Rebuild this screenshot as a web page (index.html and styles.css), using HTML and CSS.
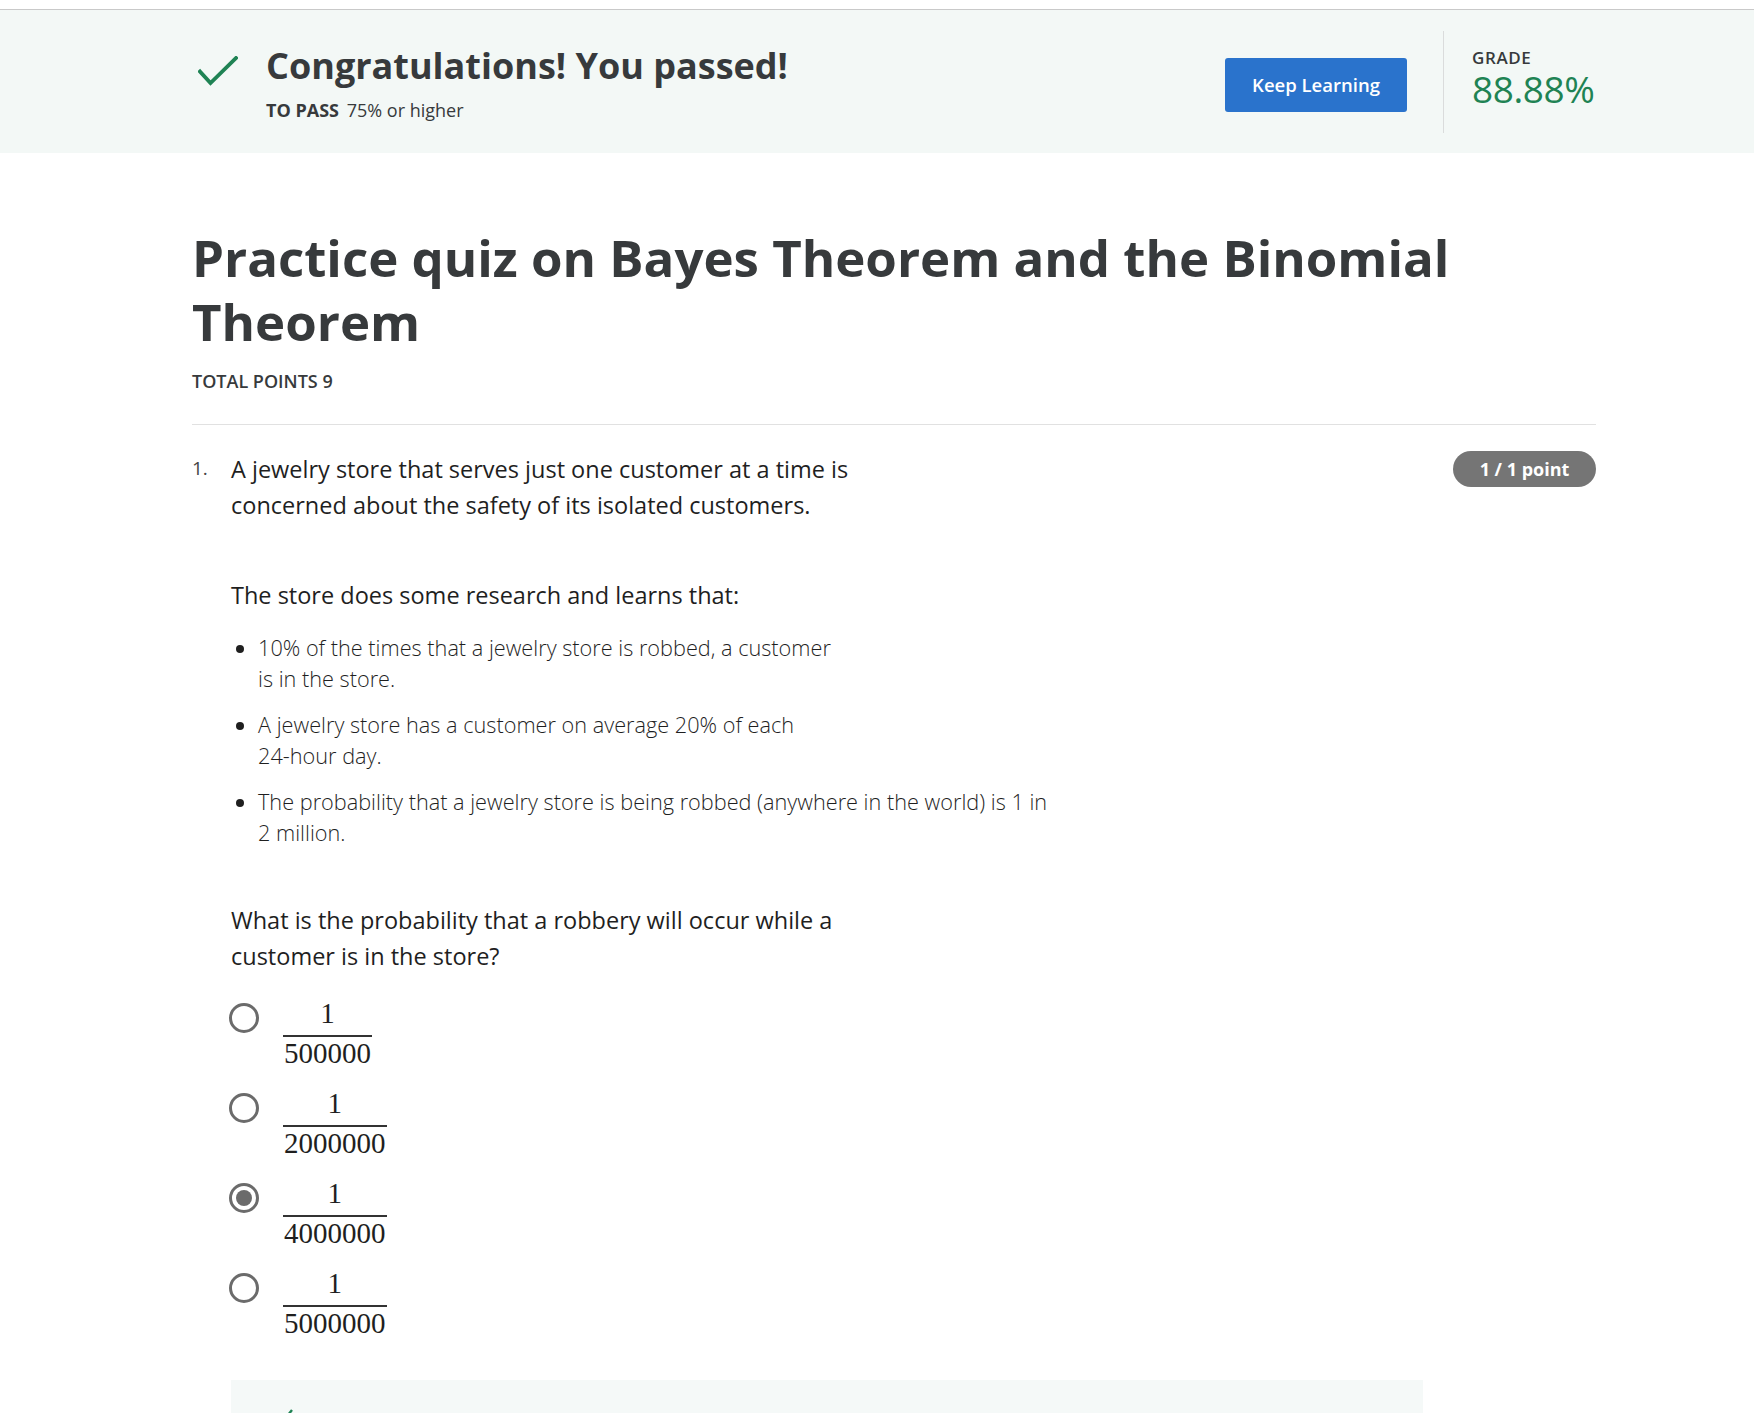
FILE: index.html
```html
<!DOCTYPE html>
<html lang="en">
<head>
<meta charset="utf-8">
<title>Practice quiz on Bayes Theorem and the Binomial Theorem</title>
<link rel="stylesheet" href="styles.css">
</head>
<body>
<div class="topbar"></div>
<header class="banner">
  <div class="banner-inner">
    <div class="pass">
      <svg class="check" width="40" height="30" viewBox="0 0 40 30" aria-hidden="true">
        <path d="M2 15.5 L12.5 27 L38 2" fill="none" stroke="#1f8354" stroke-width="3.8" stroke-linecap="square" stroke-linejoin="miter"/>
      </svg>
      <div class="pass-text">
        <h2 class="pass-title">Congratulations! You passed!</h2>
        <div class="to-pass"><span class="to-pass-label">TO PASS</span> 75% or higher</div>
      </div>
    </div>
    <div class="actions">
      <button class="keep-btn" type="button">Keep Learning</button>
      <div class="divider"></div>
      <div class="grade">
        <div class="grade-label">GRADE</div>
        <div class="grade-value">88.88%</div>
      </div>
    </div>
  </div>
</header>

<main class="content">
  <h1 class="quiz-title">Practice quiz on Bayes Theorem and the Binomial Theorem</h1>
  <div class="total-points">TOTAL POINTS 9</div>
  <hr class="rule">

  <section class="question">
    <div class="q-num">1.</div>
    <div class="q-body">
      <p class="q-text">A jewelry store that serves just one customer at a time is<br>concerned about the safety of its isolated customers.</p>
      <p class="q-text q-gap">The store does some research and learns that:</p>
      <ul class="facts">
        <li>10% of the times that a jewelry store is robbed, a customer<br>is in the store.</li>
        <li>A jewelry store has a customer on average 20% of each<br>24-hour day.</li>
        <li>The probability that a jewelry store is being robbed (anywhere in the world) is 1 in<br>2 million.</li>
      </ul>
      <p class="q-text q-ask">What is the probability that a robbery will occur while a<br>customer is in the store?</p>

      <div class="options">
        <div class="option">
          <span class="radio"></span>
          <span class="frac"><span class="num">1</span><span class="den">500000</span></span>
        </div>
        <div class="option">
          <span class="radio"></span>
          <span class="frac"><span class="num">1</span><span class="den">2000000</span></span>
        </div>
        <div class="option">
          <span class="radio checked"></span>
          <span class="frac"><span class="num">1</span><span class="den">4000000</span></span>
        </div>
        <div class="option">
          <span class="radio"></span>
          <span class="frac"><span class="num">1</span><span class="den">5000000</span></span>
        </div>
      </div>

      <div class="feedback">
        <svg class="fb-icon" width="24" height="20" viewBox="0 0 24 20" aria-hidden="true">
          <path d="M2 11 L8 17 L20 2" fill="none" stroke="#1f8354" stroke-width="2.4"/>
        </svg>
      </div>
    </div>
    <div class="points">1 / 1 point</div>
  </section>
</main>
</body>
</html>
```

FILE: styles.css
```css
html, body {
  margin: 0;
  padding: 0;
  background: #ffffff;
  overflow: hidden;
}

body {
  font-family: "Open Sans", "Noto Sans", Arial, sans-serif;
  color: #373a3c;
}

.topbar {
  height: 9px;
  border-bottom: 1px solid #c9c9c9;
  background: #ffffff;
}

.banner {
  background: #f3f8f6;
  height: 143px;
}

.banner-inner {
  margin-left: 198px;
  width: 1398px;
  height: 100%;
  display: flex;
  align-items: center;
  justify-content: space-between;
}

.pass {
  display: flex;
  align-items: flex-start;
  gap: 28px;
  padding-top: 2px;
}

.check {
  display: block;
  margin-top: 12px;
}

.pass-title {
  margin: 0;
  font-size: 36px;
  line-height: 44px;
  font-weight: 700;
  color: #373a3c;
}

.to-pass {
  margin-top: 11px;
  font-size: 18px;
  line-height: 22px;
  color: #373a3c;
}

.to-pass-label {
  font-weight: 700;
  margin-right: 3px;
}

.actions {
  display: flex;
  align-items: center;
}

.keep-btn {
  width: 182px;
  height: 54px;
  background: #2a73cc;
  border: none;
  border-radius: 3px;
  color: #ffffff;
  font-family: "Open Sans", "Noto Sans", Arial, sans-serif;
  font-size: 18.5px;
  font-weight: 600;
  padding: 0;
  margin-top: 6px;
}

.divider {
  width: 1px;
  height: 102px;
  background: #dadcdc;
  margin: 0 28px 0 36px;
}

.grade {
  width: 124px;
  margin-top: -7px;
}

.grade-label {
  font-size: 17px;
  line-height: 20px;
  font-weight: 600;
  letter-spacing: 0.6px;
  color: #373a3c;
  margin-bottom: 1px;
}

.grade-value {
  font-size: 37px;
  line-height: 40px;
  font-weight: 400;
  color: #1f8354;
  letter-spacing: -0.4px;
}

.content {
  margin-left: 192px;
  width: 1404px;
}

.quiz-title {
  margin: 72px 0 0 0;
  font-size: 51px;
  line-height: 64px;
  font-weight: 700;
  color: #373a3c;
}

.total-points {
  margin-top: 16px;
  font-size: 18px;
  line-height: 24px;
  font-weight: 600;
  color: #373a3c;
}

.rule {
  margin: 31px 0 0 0;
  border: none;
  border-top: 1px solid #e1e1e1;
  height: 0;
}

.question {
  display: flex;
  align-items: flex-start;
  padding-top: 26px;
}

.q-num {
  width: 39px;
  font-size: 19px;
  line-height: 24px;
  padding-top: 5px;
  color: #444;
  font-weight: 400;
}

.q-body {
  flex: 1;
}

.q-text {
  margin: 0;
  font-size: 23.5px;
  line-height: 36px;
  color: #1f1f1f;
}

.q-gap {
  margin-top: 54px;
}

.facts {
  margin: 19px 0 0 0;
  padding-left: 27px;
  font-size: 21.7px;
  line-height: 31px;
  font-weight: 300;
  color: #1f1f1f;
}

.facts li {
  margin-bottom: 15px;
  padding-left: 0;
}

.q-ask {
  margin-top: 54px;
}

.options {
  margin-top: 27px;
  display: flex;
  flex-direction: column;
  gap: 26px;
}

.option {
  display: flex;
  align-items: flex-start;
  gap: 24px;
  margin-left: -2px;
}

.radio {
  width: 24px;
  height: 24px;
  border: 3px solid #6b6b6b;
  border-radius: 50%;
  margin-top: 2px;
  position: relative;
  flex: none;
}

.radio.checked::after {
  content: "";
  position: absolute;
  left: 4px;
  top: 4px;
  width: 16px;
  height: 16px;
  border-radius: 50%;
  background: #6b6b6b;
}

.frac {
  display: inline-flex;
  flex-direction: column;
  align-items: stretch;
  font-family: "Liberation Serif", "Times New Roman", serif;
  font-size: 29px;
  color: #1f1f1f;
  text-align: center;
}

.num {
  line-height: 24px;
  padding-bottom: 10px;
  border-bottom: 2px solid #333;
}

.den {
  line-height: 24px;
  margin-top: 4px;
  padding: 0 1px;
}

.feedback {
  margin-top: 45px;
  width: 1192px;
  height: 80px;
  background: #f5f9f8;
  position: relative;
}

.fb-icon {
  position: absolute;
  left: 41px;
  top: 28px;
}

.points {
  margin-top: 0;
  width: 143px;
  height: 36px;
  border-radius: 18px;
  background: #757575;
  color: #ffffff;
  font-size: 18px;
  font-weight: 700;
  line-height: 36px;
  text-align: center;
  flex: none;
}
```
